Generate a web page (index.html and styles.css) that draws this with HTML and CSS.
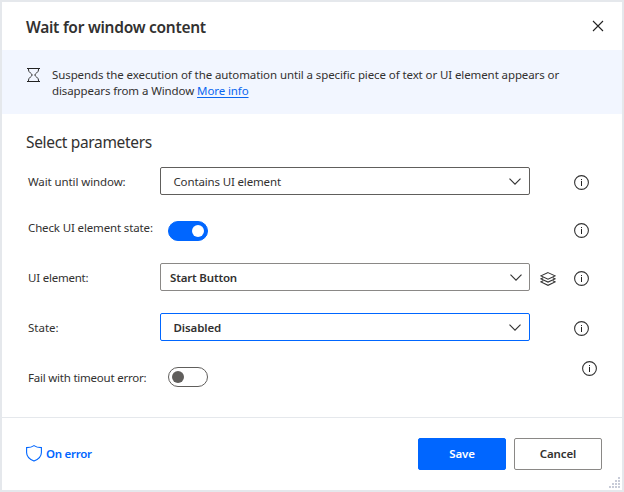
FILE: index.html
```html
<!DOCTYPE html>
<html lang="en">
<head>
<meta charset="utf-8">
<title>Wait for window content</title>
<link rel="stylesheet" href="styles.css">
</head>
<body>
<svg class="defs" width="0" height="0">
  <symbol id="info" viewBox="0 0 15 15"><circle cx="7.5" cy="7.5" r="6.9" fill="none" stroke="#333" stroke-width="1.1"/><path d="M7.5 6v5M7.5 4v1.1" fill="none" stroke="#222" stroke-width="1"/></symbol>
  <symbol id="chevron" viewBox="0 0 12 7"><path d="M.5.6 6 6.1 11.5.6" fill="none" stroke="#333" stroke-width="1.15"/></symbol>
</svg>
<main class="dialog">
  <header class="header">
    <h1 class="title">Wait for window content</h1>
    <svg class="close" width="10" height="10" viewBox="0 0 10 10"><path d="M0 0 10 10M10 0 0 10" stroke="#222" stroke-width="1.1"/></svg>
  </header>
  <section class="banner">
    <svg class="hourglass" width="13" height="14" viewBox="0 0 13 14"><path d="M0 .5h13M0 13.5h13" stroke="#222"/><path d="M1.500 .5v1.500C1.500 4.500 5.200 5.600 5.200 7S1.500 9.500 1.500 12v1.500M11.500 .5v1.500C11.500 4.500 7.800 5.600 7.800 7s3.700 2.500 3.700 5v1.500" fill="none" stroke="#333"/></svg>
    <p class="desc">Suspends the execution of the automation until a specific piece of text or UI element appears or<br>disappears from a Window <a class="link" href="#">More info</a></p>
  </section>
  <section class="params">
    <h2 class="subtitle">Select parameters</h2>
    <div class="row">
      <label class="label">Wait until window:</label>
      <div class="select dark"><span>Contains UI element</span><svg width="12" height="7"><use href="#chevron"/></svg></div>
      <svg class="info" width="15" height="15"><use href="#info"/></svg>
    </div>
    <div class="row check">
      <label class="label">Check UI element state:</label>
      <div class="toggle on"><i class="knob"></i></div>
      <svg class="info" width="15" height="15"><use href="#info"/></svg>
    </div>
    <div class="row">
      <label class="label tight">UI element:</label>
      <div class="select element"><span>Start Button</span><svg width="12" height="7"><use href="#chevron"/></svg></div>
      <svg class="layers" width="16" height="14" viewBox="0 0 16 14"><path d="M8 .6 15 3.900 8 7.200 1 3.900zM3.200 5.700 1 6.900l7 3.200 7-3.200-2.200-1.200M3.200 8.700 1 9.900l7 3.400 7-3.400-2.200-1.200" fill="none" stroke="#333" stroke-width="1.050"/></svg>
      <svg class="info" width="15" height="15"><use href="#info"/></svg>
    </div>
    <div class="row">
      <label class="label state">State:</label>
      <div class="select focus"><span>Disabled</span><svg width="12" height="7"><use href="#chevron"/></svg></div>
      <svg class="info" width="15" height="15"><use href="#info"/></svg>
    </div>
    <div class="row timeout">
      <label class="label tight">Fail with timeout error:</label>
      <div class="toggle"><i class="knob"></i></div>
      <svg class="info" width="15" height="15"><use href="#info"/></svg>
    </div>
  </section>
  <footer class="footer">
    <a class="on-error"><svg width="16" height="17" viewBox="0 0 16 17"><path d="M8 .6C6.200 2 3.500 2.600.6 2.600V7.500c0 4.300 3.500 7 7.400 8.600 3.900-1.600 7.400-4.300 7.400-8.600V2.600C12.500 2.600 9.800 2 8 .6z" fill="none" stroke="#06f" stroke-width="1.1"/></svg>On error</a>
    <button class="btn primary">Save</button>
    <button class="btn">Cancel</button>
  </footer>
  <svg class="grip" width="11" height="11" viewBox="0 0 11 11"><path d="M9 0h2v2H9zM6 3h2v2H6zM9 3h2v2H9zM3 6h2v2H3zM6 6h2v2H6zM9 6h2v2H9zM0 9h2v2H0zM3 9h2v2H3zM6 9h2v2H6zM9 9h2v2H9z" fill="#c8ccd8"/></svg>
</main>
</body>
</html>
```
FILE: styles.css
```css
* { box-sizing: border-box; }
body { margin: 0; font: 11.5px/16px "Noto Sans", "Open Sans", sans-serif; letter-spacing: -.1px; color: #323130; }
.defs { position: absolute; }
h1, h2, p { margin: 0; }
.dialog { position: relative; width: 624px; height: 492px; border: 2px solid #e5e8ec; background: #fff; display: flex; flex-direction: column; }
.header { height: 48px; padding: 0 19px 0 24px; display: flex; align-items: center; justify-content: space-between; }
.title { font-size: 15.5px; line-height: 22px; font-weight: 600; letter-spacing: -.27px; padding-top: 2px; white-space: nowrap; }
.close { overflow: visible; }
.banner { height: 64px; padding: 17px 24px 0 25px; background: #f2f6ff; display: flex; }
.hourglass { flex: none; margin: 1px 12px 0 0; }
.desc { white-space: nowrap; }
.link { color: #0a66f0; text-decoration: underline; text-underline-offset: 2px; }
.params { height: 303px; padding: 16px 24px 0; }
.subtitle { font-size: 15.5px; line-height: 24px; font-weight: 400; letter-spacing: -.33px; white-space: nowrap; }
.row { height: 50px; display: flex; align-items: center; padding: 0 9px 0 2px; }
.subtitle + .row { margin-top: 2px; }
.label { width: 132px; white-space: nowrap; padding-top: 1px; }
.label.tight { letter-spacing: -.22px; }
.label.state { letter-spacing: 0; }
.select { width: 370px; height: 28px; border: 1px solid #8a8886; border-radius: 2px; display: flex; align-items: center; justify-content: space-between; padding: 1px 8px 0 12.5px; white-space: nowrap; font-weight: 600; }
.select.dark { border-color: #605e5c; font-weight: 400; letter-spacing: -.15px; }
.select.element { padding: 1px 7px 0 9px; letter-spacing: -.17px; }
.select.focus { border-color: #06f; }
.select svg { margin-bottom: 1px; }
.info { margin: 2px 0 0 auto; }
.layers { margin: 3px 0 0 10px; }
.check { height: 46px; padding-bottom: 1px; }
.check .label { padding: 0 0 2px; letter-spacing: -.14px; }
.toggle { width: 40px; height: 20px; margin-left: 8px; border: 1px solid #605e5c; border-radius: 10px; display: flex; align-items: center; padding: 0 3px; }
.knob { width: 12px; height: 12px; border-radius: 50%; background: #605e5c; }
.toggle.on { margin-top: 5px; border-color: #06f; background: #06f; justify-content: flex-end; }
.on .knob { background: #fff; }
.check .info { margin-top: 4px; }
.timeout { padding-right: 1px; }
.timeout .info { margin: 0 0 17px auto; }
.footer { height: 73px; border-top: 1px solid #e5e8ec; padding: 0 20px 0 24px; display: flex; align-items: center; gap: 8px; font-weight: 600; white-space: nowrap; }
.on-error { display: flex; align-items: center; gap: 4px; color: #06f; margin-right: auto; letter-spacing: -.27px; }
.on-error svg { margin-bottom: 1px; }
.btn { width: 88px; height: 32px; border: 1px solid #8a8886; border-radius: 2px; background: #fff; color: #323130; font: inherit; letter-spacing: inherit; padding: 0; }
.primary { background: #06f; border-color: #06f; color: #fff; }
.grip { position: absolute; right: 2px; bottom: 2px; }
```
